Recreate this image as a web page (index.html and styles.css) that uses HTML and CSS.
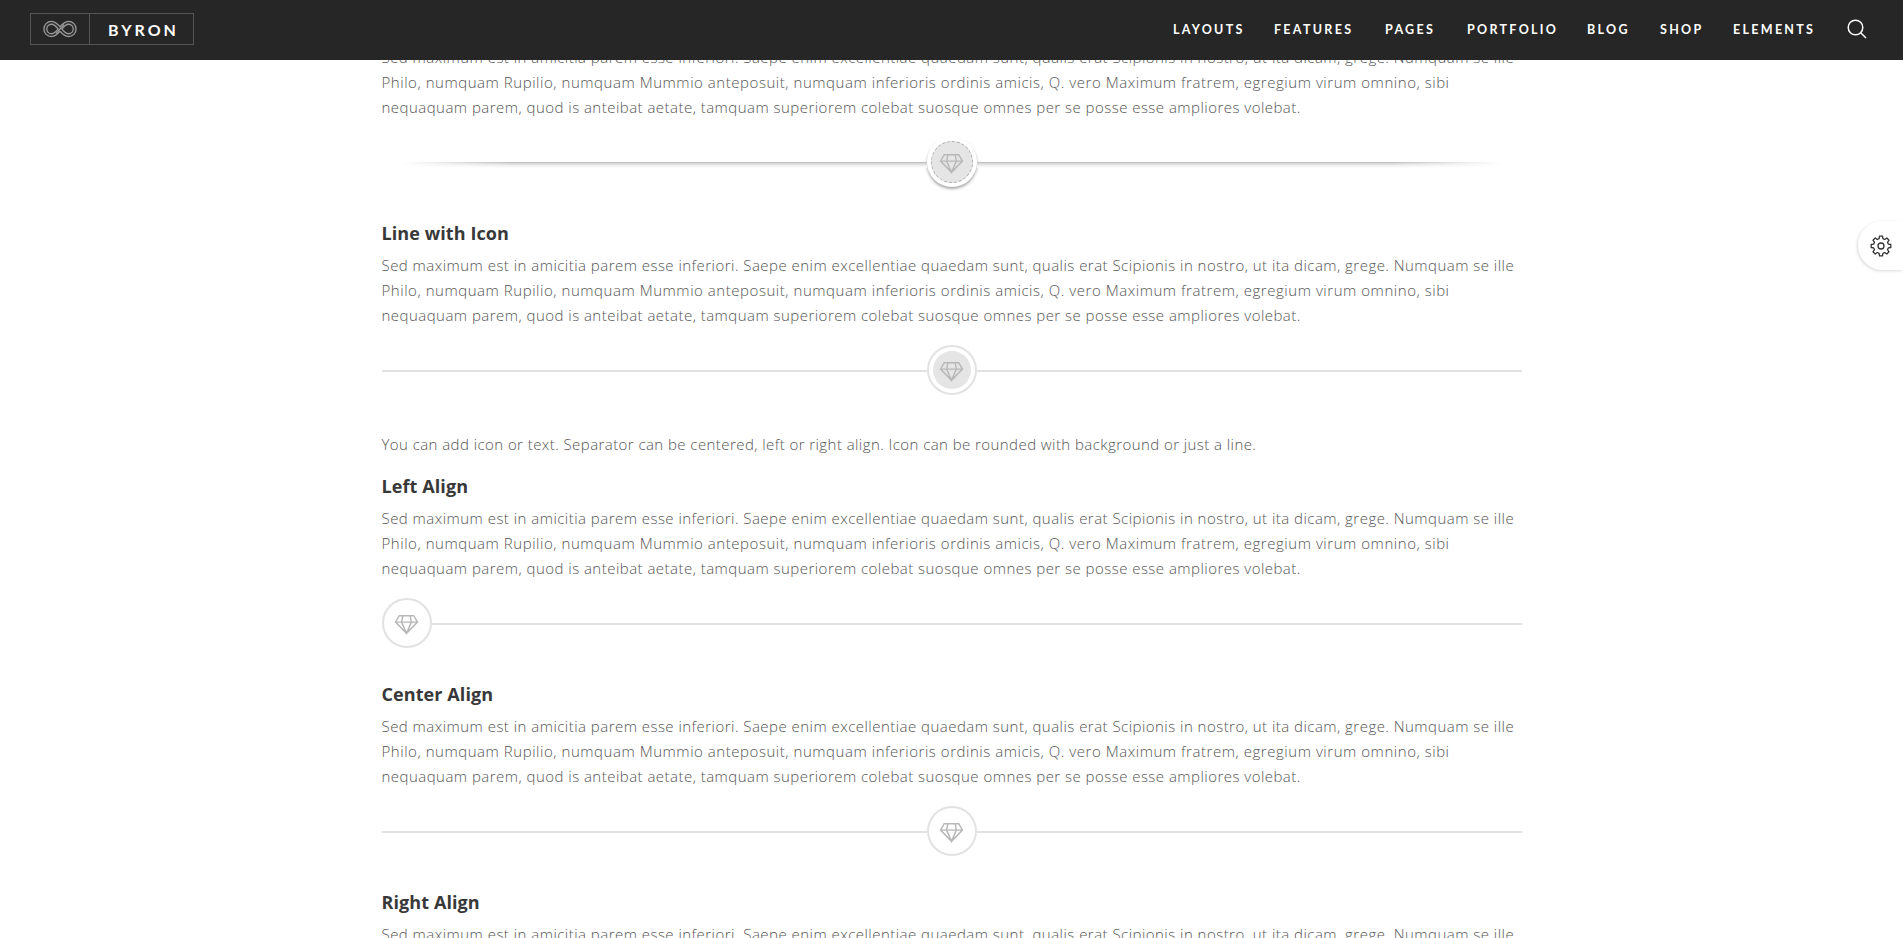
FILE: index.html
```html
<!DOCTYPE html>
<html lang="en">
<head>
<meta charset="utf-8">
<title>Byron - Separators</title>
<link rel="stylesheet" href="styles.css">
</head>
<body>
<svg width="0" height="0" class="defs" aria-hidden="true">
  <symbol id="diamond" viewBox="0 0 24 20">
    <path d="M5 1.500h14l3.500 6.200L12 18.500 1.500 7.700z M1.500 7.700h21 M8.500 1.500 7.300 7.700 12 18.500l4.700-10.800L15.500 1.500"/>
  </symbol>
</svg>
<header class="header">
  <a class="logo">
    <span class="logo-mark">
      <svg width="34" height="18" viewBox="0 0 34 18">
        <path class="loop-outer" d="M17 9C13.500 13.500 11.500 15.200 8.500 15.200a6.200 6.200 0 1 1 0-12.400C11.500 2.800 13.500 4.500 17 9s5.500 6.200 8.500 6.200a6.200 6.200 0 1 0 0-12.400C22.500 2.800 20.500 4.500 17 9z"/>
        <path class="loop-inner" d="M17 9C13.500 13.500 11.500 15.200 8.500 15.200a6.200 6.200 0 1 1 0-12.400C11.500 2.800 13.500 4.500 17 9s5.500 6.200 8.500 6.200a6.200 6.200 0 1 0 0-12.400C22.500 2.800 20.500 4.500 17 9z"/>
        <path class="loop-strand" d="M13 13.500 21 4.500"/>
      </svg>
    </span>
    <span class="logo-name">BYRON</span>
  </a>
  <nav class="nav">
    <a class="nav-item layouts">LAYOUTS</a>
    <a class="nav-item features">FEATURES</a>
    <a class="nav-item pages">PAGES</a>
    <a class="nav-item portfolio">PORTFOLIO</a>
    <a class="nav-item blog">BLOG</a>
    <a class="nav-item shop">SHOP</a>
    <a class="nav-item elements">ELEMENTS</a>
    <svg class="search" width="20" height="20" viewBox="0 0 20 20"><circle cx="8.500" cy="8.500" r="7.300"/><path d="M13.700 13.700 19 19"/></svg>
  </nav>
</header>
<main class="content">
  <p class="text"><span class="row-a">Sed maximum est in amicitia parem esse inferiori. Saepe enim excellentiae quaedam sunt, qualis erat Scipionis in nostro, ut ita dicam, grege. Numquam se ille</span><br><span class="row-b">Philo, numquam Rupilio, numquam Mummio anteposuit, numquam inferioris ordinis amicis, Q. vero Maximum fratrem, egregium virum omnino, sibi</span><br><span class="row-c">nequaquam parem, quod is anteibat aetate, tamquam superiorem colebat suosque omnes per se posse esse ampliores volebat.</span></p>
  <div class="separator shadowed">
    <span class="line fade-left"></span>
    <span class="badge raised"><span class="disc dashed"><svg class="gem"><use href="#diamond"/></svg></span></span>
    <span class="line fade-right"></span>
  </div>
  <h4 class="title">Line with Icon</h4>
  <p class="text"><span class="row-a">Sed maximum est in amicitia parem esse inferiori. Saepe enim excellentiae quaedam sunt, qualis erat Scipionis in nostro, ut ita dicam, grege. Numquam se ille</span><br><span class="row-b">Philo, numquam Rupilio, numquam Mummio anteposuit, numquam inferioris ordinis amicis, Q. vero Maximum fratrem, egregium virum omnino, sibi</span><br><span class="row-c">nequaquam parem, quod is anteibat aetate, tamquam superiorem colebat suosque omnes per se posse esse ampliores volebat.</span></p>
  <div class="separator">
    <span class="line"></span>
    <span class="badge"><span class="disc"><svg class="gem"><use href="#diamond"/></svg></span></span>
    <span class="line"></span>
  </div>
  <p class="text note">You can add icon or text. Separator can be centered, left or right align. Icon can be rounded with background or just a line.</p>
  <h4 class="title">Left Align</h4>
  <p class="text"><span class="row-a">Sed maximum est in amicitia parem esse inferiori. Saepe enim excellentiae quaedam sunt, qualis erat Scipionis in nostro, ut ita dicam, grege. Numquam se ille</span><br><span class="row-b">Philo, numquam Rupilio, numquam Mummio anteposuit, numquam inferioris ordinis amicis, Q. vero Maximum fratrem, egregium virum omnino, sibi</span><br><span class="row-c">nequaquam parem, quod is anteibat aetate, tamquam superiorem colebat suosque omnes per se posse esse ampliores volebat.</span></p>
  <div class="separator">
    <span class="badge"><svg class="gem"><use href="#diamond"/></svg></span>
    <span class="line"></span>
  </div>
  <h4 class="title">Center Align</h4>
  <p class="text"><span class="row-a">Sed maximum est in amicitia parem esse inferiori. Saepe enim excellentiae quaedam sunt, qualis erat Scipionis in nostro, ut ita dicam, grege. Numquam se ille</span><br><span class="row-b">Philo, numquam Rupilio, numquam Mummio anteposuit, numquam inferioris ordinis amicis, Q. vero Maximum fratrem, egregium virum omnino, sibi</span><br><span class="row-c">nequaquam parem, quod is anteibat aetate, tamquam superiorem colebat suosque omnes per se posse esse ampliores volebat.</span></p>
  <div class="separator">
    <span class="line"></span>
    <span class="badge"><svg class="gem"><use href="#diamond"/></svg></span>
    <span class="line"></span>
  </div>
  <h4 class="title">Right Align</h4>
  <p class="text"><span class="row-a">Sed maximum est in amicitia parem esse inferiori. Saepe enim excellentiae quaedam sunt, qualis erat Scipionis in nostro, ut ita dicam, grege. Numquam se ille</span></p>
</main>
<aside class="settings">
  <svg width="22" height="22" viewBox="0 0 22 22">
    <circle cx="11" cy="11" r="3"/>
    <path d="M9.500 1.200h3l.4 2.500 1.800.8 2.100-1.500 2.200 2.200-1.500 2.100.8 1.800 2.500.4v3l-2.500.4-.8 1.800 1.500 2.100-2.200 2.200-2.100-1.500-1.800.8-.4 2.500h-3l-.4-2.500-1.800-.8L5.200 19 3 16.800l1.500-2.100-.8-1.800-2.500-.4v-3l2.500-.4.8-1.800L3 5.200 5.200 3l2.100 1.500 1.800-.8z"/>
  </svg>
</aside>
</body>
</html>
```
FILE: styles.css
```css
body {
  margin: 0;
  height: 938px;
  overflow: hidden;
  background: #fff;
  font-family: "Open Sans", "Noto Sans", sans-serif;
}
.defs { position: absolute; }
.header {
  position: relative;
  z-index: 2;
  display: flex;
  justify-content: space-between;
  align-items: center;
  box-sizing: border-box;
  height: 60px;
  padding: 0 36px 2px 30px;
  background: #262626;
}
.logo {
  display: flex;
  box-sizing: border-box;
  width: 164px;
  height: 32px;
  border: 1px solid #555;
}
.logo-mark {
  display: flex;
  align-items: center;
  justify-content: center;
  width: 58px;
  border-right: 1px solid #555;
}
.loop-outer, .loop-inner, .loop-strand { fill: none; }
.loop-outer { stroke: #999; stroke-width: 4.200; }
.loop-inner { stroke: #303030; stroke-width: 1.600; }
.loop-strand { stroke: #999; stroke-width: 1.200; }
.logo-name {
  padding-left: 18px;
  font: 700 16px/31px Lato, sans-serif;
  letter-spacing: 3px;
  color: #fff;
}
.nav {
  display: flex;
  align-items: center;
}
.nav-item {
  padding-top: 1px;
  box-sizing: border-box;
  font: 700 12.500px/20px Lato, sans-serif;
  letter-spacing: 2.300px;
  color: #fff;
  white-space: nowrap;
}
.layouts { width: 101px; }
.features { width: 111px; }
.pages { width: 82px; }
.portfolio { width: 120px; }
.blog { width: 73px; }
.shop { width: 73px; }
.elements { width: 114px; }
.search { fill: none; stroke: #fff; stroke-width: 1.500; }
.content {
  width: 1140px;
  margin: -15px auto 0;
}
.text {
  margin: 0;
  font-size: 15px;
  font-weight: 300;
  line-height: 25px;
  letter-spacing: 0.500px;
  color: #555;
  white-space: nowrap;
}
.row-a { letter-spacing: 0.469px; }
.row-b { letter-spacing: 0.543px; }
.row-c { letter-spacing: 0.470px; }
.note {
  margin: 37px 0 16px;
  letter-spacing: 0.431px;
}
.title {
  margin: 0 0 7px;
  font-size: 18px;
  font-weight: 700;
  line-height: 26px;
  letter-spacing: 0.090px;
  color: #383838;
}
.separator {
  display: flex;
  align-items: center;
  height: 50px;
  margin-top: 17px;
}
.separator + .title { margin-top: 33px; }
.line {
  flex: 1;
  height: 2px;
  margin-top: 2px;
  background: #e2e2e2;
}
.badge {
  display: flex;
  align-items: center;
  justify-content: center;
  box-sizing: border-box;
  width: 50px;
  height: 50px;
  border: 2px solid #e2e2e2;
  border-radius: 50%;
}
.disc {
  display: flex;
  align-items: center;
  justify-content: center;
  box-sizing: border-box;
  width: 38px;
  height: 38px;
  border-radius: 50%;
  background: #e5e5e5;
}
.gem {
  width: 25px;
  height: 21px;
  margin: 2px 1px 0 0;
  fill: none;
  stroke: #b8b8b8;
  stroke-width: 1.400;
}
.raised {
  border: 0;
  box-shadow: 0 2px 3px rgba(0, 0, 0, 0.35);
}
.dashed {
  width: 42px;
  height: 42px;
  border: 1px dashed #aaa;
}
.shadowed .line {
  height: 6px;
  margin-top: 5px;
  background: linear-gradient(#b8b8b8, #d8d8d8 25%, #f0f0f0 60%, #fff);
}
.fade-left { mask-image: linear-gradient(to right, transparent 20px, #000 130px); }
.fade-right { mask-image: linear-gradient(to left, transparent 20px, #000 130px); }
.settings {
  position: absolute;
  top: 221px;
  right: 0;
  display: flex;
  align-items: center;
  box-sizing: border-box;
  width: 45px;
  height: 49px;
  padding-left: 12px;
  border-radius: 25px 0 0 25px;
  background: #fff;
  box-shadow: -1px 1px 3px rgba(0, 0, 0, 0.15);
}
.settings svg { fill: none; stroke: #333; stroke-width: 1.300; stroke-linejoin: round; }
```
